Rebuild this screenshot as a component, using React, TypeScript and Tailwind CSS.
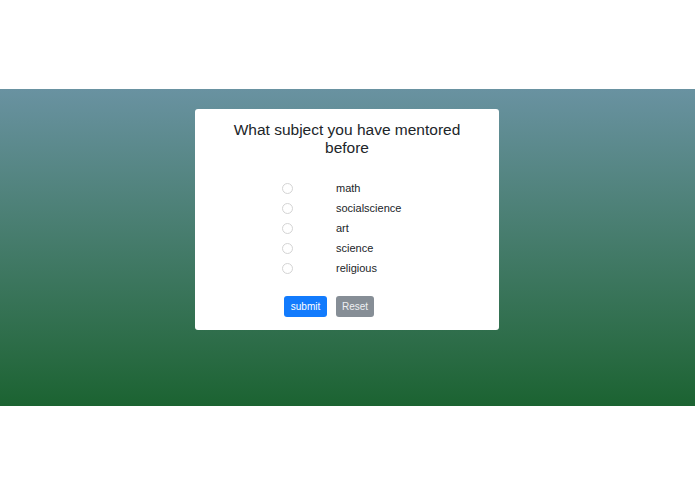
import React from "react";

const options = ["math", "socialscience", "art", "science", "religious"];

export default function App() {
  return (
    <div className="w-[695px] h-[494px] bg-white flex flex-col" style={{ fontFamily: '"Liberation Sans", Arial, sans-serif' }}>
      <div className="h-[89px] bg-white" />
      <div className="h-[317px] bg-gradient-to-b from-[#6992a1] to-[#1b6331] pt-[20px] pl-[195px]">
        <div className="w-[304px] h-[221px] bg-white rounded-[3px] flex flex-col items-start">
          <h1 className="self-center mt-[12px] w-[250px] text-center text-[15.5px] leading-[18px] text-[#212529]">
            What subject you have mentored before
          </h1>
          <div className="mt-[21px] ml-[87px] flex flex-col">
            {options.map((o) => (
              <label key={o} className="h-[20px] flex items-center">
                <span className="w-[54px] flex items-center">
                  <span className="w-[11px] h-[11px] rounded-full border border-[#d4d4d4] bg-white" />
                </span>
                <span className="text-[11px] text-[#212529]">{o}</span>
              </label>
            ))}
          </div>
          <div className="mt-[18px] ml-[89px] flex gap-[9px]">
            <button className="w-[43px] h-[21px] rounded-[3px] bg-[#127bfd] text-white text-[10px] flex items-center justify-center">
              submit
            </button>
            <button className="w-[38px] h-[21px] rounded-[3px] bg-[#868e96] text-[#eef0f2] text-[10px] flex items-center justify-center">
              Reset
            </button>
          </div>
        </div>
      </div>
      <div className="flex-1 bg-white" />
    </div>
  );
}
